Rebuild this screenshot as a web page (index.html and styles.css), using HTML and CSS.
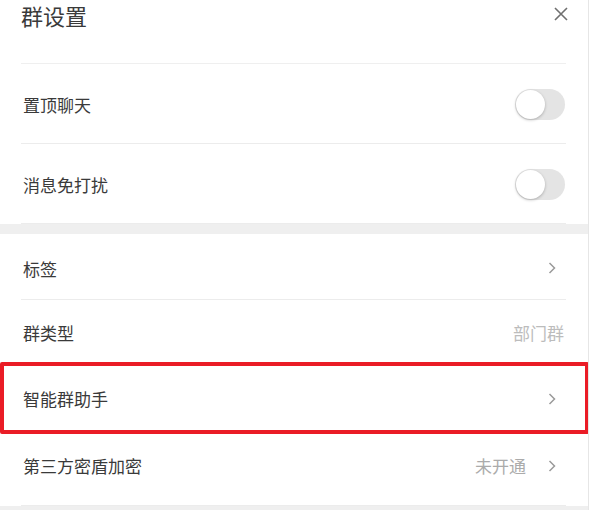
FILE: index.html
```html
<!DOCTYPE html>
<html lang="zh-CN">
<head>
<meta charset="utf-8">
<title>群设置</title>
<link rel="stylesheet" href="styles.css">
</head>
<body>
<div class="panel">
  <div class="header">
    <h1 class="title">群设置</h1>
    <button class="close" aria-label="关闭">
      <svg width="14" height="14" viewBox="0 0 14 14"><path d="M1 1 L13 13 M13 1 L1 13" stroke="#6f6f6f" stroke-width="1.6" fill="none"/></svg>
    </button>
  </div>
  <div class="group first">
    <div class="row tall"><span class="label">置顶聊天</span><span class="switch"><span class="knob"></span></span></div>
    <div class="row tall"><span class="label">消息免打扰</span><span class="switch"><span class="knob"></span></span></div>
  </div>
  <div class="gap"></div>
  <div class="group">
    <div class="row r3"><span class="label">标签</span><span class="right"><svg class="chev" width="8" height="12" viewBox="0 0 8 12"><path d="M1.5 1 L6.5 6 L1.5 11" stroke="#9a9a9a" stroke-width="1.5" fill="none"/></svg></span></div>
    <div class="row"><span class="label">群类型</span><span class="right"><span class="value">部门群</span></span></div>
    <div class="row"><span class="label">智能群助手</span><span class="right"><svg class="chev" width="8" height="12" viewBox="0 0 8 12"><path d="M1.5 1 L6.5 6 L1.5 11" stroke="#9a9a9a" stroke-width="1.5" fill="none"/></svg></span></div>
    <div class="row last"><span class="label">第三方密盾加密</span><span class="right"><span class="value dim">未开通</span><svg class="chev" width="8" height="12" viewBox="0 0 8 12"><path d="M1.5 1 L6.5 6 L1.5 11" stroke="#9a9a9a" stroke-width="1.5" fill="none"/></svg></span></div>
  </div>
  <div class="gap"></div>
  <div class="highlight"></div>
</div>
</body>
</html>
```

FILE: styles.css
```css
* { box-sizing: border-box; }
html, body {
  margin: 0;
  padding: 0;
  background: #fff;
  font-family: "Noto Sans CJK SC", "Noto Sans", sans-serif;
  color: #333;
}
.panel {
  position: relative;
  width: 589px;
  height: 510px;
  overflow: hidden;
  border-right: 1px solid #e6e6e6;
}
.header {
  height: 63px;
  display: flex;
  justify-content: space-between;
  align-items: flex-start;
  padding: 0 20px 0 21px;
}
.title {
  margin: 0;
  font-size: 22px;
  font-weight: 400;
  line-height: 30px;
  color: #3a3a3a;
}
.close {
  border: 0;
  background: none;
  padding: 0;
  margin-top: 7px;
  width: 14px;
  height: 14px;
  display: flex;
}
.group {
  margin: 0 22px 0 21px;
}
.group.first {
  border-top: 1px solid #efefef;
}
.row {
  height: 66px;
  display: flex;
  align-items: center;
  justify-content: space-between;
  border-bottom: 1px solid #ececec;
  padding: 0 0 0 2px;
  font-size: 17px;
}
.row.tall {
  height: 80px;
  padding-top: 2px;
}
.row.r3 {
  padding-top: 3px;
}
.row.last {
  height: 74px;
  padding-bottom: 6px;
}
.label {
  color: #3a3a3a;
}
.right {
  display: flex;
  align-items: center;
  gap: 22px;
  padding-right: 10px;
}
.value {
  color: #bcbcbc;
  font-size: 17px;
  margin-right: -8px;
}
.value.dim {
  color: #ababab;
  margin-right: 0;
}
.chev {
  display: block;
}
.switch {
  width: 50px;
  height: 31px;
  border-radius: 16px;
  background: #e4e4e4;
  position: relative;
  margin-right: 1px;
}
.knob {
  position: absolute;
  left: 1px;
  top: 1px;
  width: 29px;
  height: 29px;
  border-radius: 50%;
  background: #fff;
  box-shadow: 0 1px 3px rgba(0,0,0,0.25);
}
.gap {
  height: 10px;
  background: #efefef;
}
.highlight {
  position: absolute;
  left: 0;
  top: 362px;
  width: 589px;
  height: 72px;
  border: 4px solid #ea1c26;
  border-radius: 2px;
}
```
